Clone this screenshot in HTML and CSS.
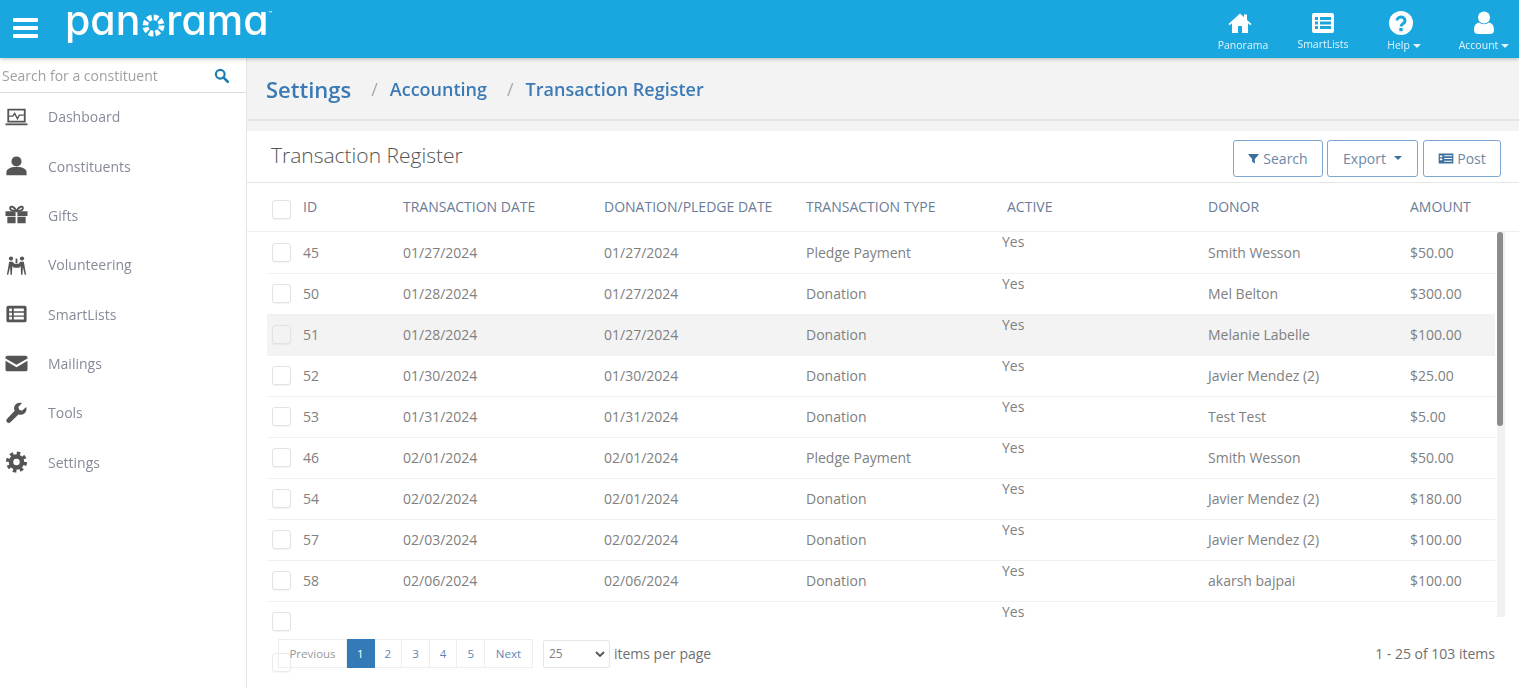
FILE: index.html
```html
<!DOCTYPE html>
<html lang="en">
<head>
    <meta charset="UTF-8">
    <title>Transaction Register</title>
    <link rel="stylesheet" href="styles.css">
</head>
<body>
<div class="page">
    <header class="topbar">
        <div class="burger"><span></span><span></span><span></span></div>
        <div class="logo">pan<svg class="logo-o" viewBox="0 0 24 24"><circle cx="12" cy="12" r="8.500" fill="none" stroke="#fff" stroke-width="6" stroke-dasharray="4.600 2.070"/></svg>rama<sup>™</sup></div>
        <nav class="topnav">
            <a class="topnav-item topnav-home">
                <svg viewBox="0 0 24 24"><path d="M12 2.500 0.500 13l1.200 1.200L4 12.200V22h6v-7h4v7h6v-9.800l2.300 2 1.200-1.200-4.500-4.100V3.500h-3v2.800z" fill="#fff"/></svg>
                <span>Panorama</span>
            </a>
            <a class="topnav-item topnav-lists">
                <svg viewBox="0 0 24 24"><path fill-rule="evenodd" d="M3 2h18a2 2 0 0 1 2 2v16a2 2 0 0 1-2 2H3a2 2 0 0 1-2-2V4a2 2 0 0 1 2-2zm1 4v3h3V6zm5 0v3h11V6zm-5 4.500v3h3v-3zm5 0v3h11v-3zM4 15v3h3v-3zm5 0v3h11v-3z" fill="#fff"/></svg>
                <span>SmartLists</span>
            </a>
            <a class="topnav-item topnav-help">
                <svg viewBox="0 0 24 24"><circle cx="12" cy="12" r="12" fill="#fff"/><path d="M8 9.500a4 3.600 0 1 1 6.300 3c-1.500 1-2.300 1.500-2.300 3" fill="none" stroke="#1aa7e0" stroke-width="3"/><rect x="10.300" y="17" width="3.400" height="3.200" fill="#1aa7e0"/></svg>
                <span>Help<i class="caret"></i></span>
            </a>
            <a class="topnav-item topnav-account">
                <svg viewBox="0 0 24 24"><circle cx="12" cy="6.500" r="6" fill="#fff"/><path d="M2 19c0-5 2.500-7 5-7.500 1.500 1.200 3 1.700 5 1.700s3.500-.5 5-1.700c2.500.5 5 2.500 5 7.500 0 3-2 4-4 4H6c-2 0-4-1-4-4z" fill="#fff"/></svg>
                <span>Account<i class="caret"></i></span>
            </a>
        </nav>
    </header>

    <div class="layout">
        <aside class="sidebar">
            <div class="side-search">
                <span>Search for a constituent</span>
                <svg viewBox="0 0 24 24"><circle cx="10" cy="10" r="7" fill="none" stroke="#1b7db0" stroke-width="3.500"/><path d="m15 15 7 7" stroke="#1b7db0" stroke-width="4" stroke-linecap="round"/></svg>
            </div>
            <ul class="side-nav">
                <li><svg viewBox="0 0 24 24"><path fill-rule="evenodd" d="M2 3h20v15H2zm2 2v11h16V5z" fill="#555"/><path d="M0 19h24v2H0z" fill="#555"/><path d="M4 11h4l2-3 3 6 2-4h5" fill="none" stroke="#555" stroke-width="1.500"/></svg>Dashboard</li>
                <li><svg viewBox="0 0 24 24"><circle cx="12" cy="7" r="5.500" fill="#555"/><path d="M1 22v-3c0-4 4-6 11-6s11 2 11 6v3z" fill="#555"/></svg>Constituents</li>
                <li><svg viewBox="0 0 24 24"><path d="M0 8h11v5H0zm13 0h11v5H13zM2 14h9v7H2zm11 0h9v7h-9z" fill="#555"/><path d="M12 7.500C9 7.500 5 7 5 4.500S9 2 12 7.500C15 2 19 2 19 4.500S15 7.500 12 7.500z" fill="none" stroke="#555" stroke-width="2"/></svg>Gifts</li>
                <li><svg viewBox="0 0 24 24"><circle cx="6" cy="5" r="2.300" fill="#555"/><circle cx="18" cy="5" r="2.300" fill="#555"/><path d="M4 8.500h4l1.500 2h5l1.500-2h4l2.500 14H21l-2-8-.5 8H17l-.5-9.500-1.500 2H9l-1.500-2L7 22.500H5.500l-.5-8-2 8H1.500z" fill="#555"/><path d="M11 5h2v5h-2z" fill="#555"/></svg>Volunteering</li>
                <li><svg viewBox="0 0 24 24"><path fill-rule="evenodd" d="M3 3h18a2 2 0 0 1 2 2v14a2 2 0 0 1-2 2H3a2 2 0 0 1-2-2V5a2 2 0 0 1 2-2zm1 3v3h3V6zm5 0v3h11V6zm-5 4.500v3h3v-3zm5 0v3h11v-3zM4 15v3h3v-3zm5 0v3h11v-3z" fill="#555"/></svg>SmartLists</li>
                <li><svg viewBox="0 0 24 24"><path d="M2 4h20a2 2 0 0 1 2 2v1l-12 7L0 7V6a2 2 0 0 1 2-2zM0 9.500l12 7 12-7V19a2 2 0 0 1-2 2H2a2 2 0 0 1-2-2z" fill="#555"/></svg>Mailings</li>
                <li><svg viewBox="0 0 24 24"><path d="M22.500 5.500 18 9.500l-3-1-1-3 4-4.300c-3-1-6.500-.2-8 2.800-1 2-.8 4 0 5.500L2 18c-1.500 1.500-1.300 3-.3 4s2.500 1.200 4-.3l8.500-8.200c1.700.7 3.800.8 5.600-.3 3-1.800 3.700-5 2.700-7.700z" fill="#555"/></svg>Tools</li>
                <li><svg viewBox="0 0 24 24"><circle cx="12" cy="12" r="9.500" fill="none" stroke="#555" stroke-width="4" stroke-dasharray="3.730 3.730"/><circle cx="12" cy="12" r="6" fill="none" stroke="#555" stroke-width="5"/></svg>Settings</li>
            </ul>
        </aside>

        <main class="content">
            <div class="crumbs">
                <a class="crumb-root">Settings</a>
                <span class="crumb-sep">/</span>
                <a>Accounting</a>
                <span class="crumb-sep">/</span>
                <a>Transaction Register</a>
            </div>

            <section class="card">
                <div class="card-head">
                    <h2>Transaction Register</h2>
                    <div class="actions">
                        <button class="btn btn-search"><svg viewBox="0 0 24 24"><path d="M1 2h22v2l-8 9v10l-6-4v-6L1 4z" fill="#3d6f9e"/></svg>Search</button>
                        <button class="btn btn-export">Export<i class="caret caret-dark"></i></button>
                        <button class="btn btn-post"><svg viewBox="0 0 24 18"><path fill-rule="evenodd" d="M0 1h24v16H0zm9 2.500v2h13v-2zm0 4.500v2h13V8zm0 4.500v2h13v-2zM2 4v3h4V4zm0 5v3h4V9z" fill="#3d6f9e"/></svg>Post</button>
                    </div>
                </div>

                <div class="grid grid-head">
                    <span class="check"></span>
                    <span>ID</span>
                    <span>Transaction Date</span>
                    <span>Donation/Pledge Date</span>
                    <span>Transaction Type</span>
                    <span>Active</span>
                    <span>Donor</span>
                    <span>Amount</span>
                </div>

                <div class="scroller">
                    <div class="rows">
                        <div class="grid row row-first"><span class="check"></span><span>45</span><span>01/27/2024</span><span>01/27/2024</span><span>Pledge Payment</span><span class="active">Yes</span><span>Smith Wesson</span><span>$50.00</span></div>
                        <div class="grid row"><span class="check"></span><span>50</span><span>01/28/2024</span><span>01/27/2024</span><span>Donation</span><span class="active">Yes</span><span>Mel Belton</span><span>$300.00</span></div>
                        <div class="grid row row-hover"><span class="check"></span><span>51</span><span>01/28/2024</span><span>01/27/2024</span><span>Donation</span><span class="active">Yes</span><span>Melanie Labelle</span><span>$100.00</span></div>
                        <div class="grid row"><span class="check"></span><span>52</span><span>01/30/2024</span><span>01/30/2024</span><span>Donation</span><span class="active">Yes</span><span>Javier Mendez (2)</span><span>$25.00</span></div>
                        <div class="grid row"><span class="check"></span><span>53</span><span>01/31/2024</span><span>01/31/2024</span><span>Donation</span><span class="active">Yes</span><span>Test Test</span><span>$5.00</span></div>
                        <div class="grid row"><span class="check"></span><span>46</span><span>02/01/2024</span><span>02/01/2024</span><span>Pledge Payment</span><span class="active">Yes</span><span>Smith Wesson</span><span>$50.00</span></div>
                        <div class="grid row"><span class="check"></span><span>54</span><span>02/02/2024</span><span>02/01/2024</span><span>Donation</span><span class="active">Yes</span><span>Javier Mendez (2)</span><span>$180.00</span></div>
                        <div class="grid row"><span class="check"></span><span>57</span><span>02/03/2024</span><span>02/02/2024</span><span>Donation</span><span class="active">Yes</span><span>Javier Mendez (2)</span><span>$100.00</span></div>
                        <div class="grid row"><span class="check"></span><span>58</span><span>02/06/2024</span><span>02/06/2024</span><span>Donation</span><span class="active">Yes</span><span>akarsh bajpai</span><span>$100.00</span></div>
                        <div class="grid row"><span></span><span></span><span></span><span></span><span></span><span class="active">Yes</span><span></span><span></span></div>
                    </div>
                    <div class="scrollbar"><div class="thumb"></div></div>
                </div>

                <!-- checkboxes that spill out under the table -->
                <span class="check spill spill-1"></span>
                <span class="check spill spill-2"></span>

                <div class="pager-row">
                    <div class="pager">
                        <a class="page-link page-prev">Previous</a>
                        <a class="page-link page-on">1</a>
                        <a class="page-link">2</a>
                        <a class="page-link">3</a>
                        <a class="page-link">4</a>
                        <a class="page-link">5</a>
                        <a class="page-link page-next">Next</a>
                    </div>
                    <div class="per-page">
                        <span>25</span>
                        <svg viewBox="0 0 10 6"><path d="m1 1 4 4 4-4" fill="none" stroke="#555" stroke-width="1.800"/></svg>
                    </div>
                    <span class="per-label">items per page</span>
                    <span class="total">1 - 25 of 103 items</span>
                </div>
            </section>
        </main>
    </div>
</div>
</body>
</html>
```

FILE: styles.css
```css
html, body {
    margin: 0;
    height: 100%;
    overflow: hidden;
    background: #fff;
}
.page {
    display: flex;
    flex-direction: column;
    height: 688px;
    font-family: 'Open Sans', 'Liberation Sans', sans-serif;
    font-size: 14px;
    color: #808080;
    filter: blur(0.6px);
}

/* top bar */
.topbar {
    display: flex;
    align-items: flex-start;
    height: 58px;
    flex: none;
    background: #1aa7e0;
    box-shadow: 0 1px 4px rgba(0, 0, 0, 0.25);
    position: relative;
    z-index: 2;
}
.burger {
    display: flex;
    flex-direction: column;
    gap: 4px;
    width: 25px;
    margin: 18px 0 0 13px;
}
.burger span {
    height: 4px;
    background: #fff;
    border-radius: 1px;
}
.logo {
    display: flex;
    align-items: flex-start;
    margin: 0 0 0 27px;
    font-family: 'Inter', 'Open Sans', sans-serif;
    font-feature-settings: 'cv11' 1;
    font-size: 41px;
    font-weight: 500;
    line-height: 40px;
    color: #fff;
}
.logo-o {
    width: 23px;
    height: 23px;
    margin: 14px 1px 0 2px;
}
.logo sup {
    font-size: 6px;
    line-height: 28px;
}
.topnav {
    display: flex;
    margin-left: auto;
}
.topnav-item {
    display: flex;
    flex-direction: column;
    align-items: center;
    width: 80px;
    padding-top: 11px;
    font-size: 10.500px;
    line-height: 14px;
    color: #e3f4fb;
}
.topnav-item svg {
    width: 26px;
    height: 24px;
    margin-bottom: 3px;
}
.topnav-home svg,
.topnav-help svg {
    margin-right: 6px;
}
.topnav-lists span {
    margin-top: -1px;
}
.topnav-help {
    width: 82px;
}
.topnav-account {
    width: 70px;
    padding-left: 4px;
}
.caret {
    display: inline-block;
    margin-left: 3px;
    vertical-align: middle;
    border-top: 4px solid #e3f4fb;
    border-left: 4px solid transparent;
    border-right: 4px solid transparent;
}
.caret-dark {
    margin-left: 8px;
    border-top-color: #3d6f9e;
}

/* sidebar */
.layout {
    display: flex;
    flex: 1;
    min-height: 0;
}
.sidebar {
    width: 246px;
    flex: none;
    border-right: 1px solid #e4e4e4;
}
.side-search {
    display: flex;
    align-items: center;
    justify-content: space-between;
    height: 34px;
    padding: 0 17px 0 2px;
    border-bottom: 1px solid #ddd;
    color: #a0a0a0;
}
.side-search svg {
    width: 15px;
    height: 15px;
}
.side-nav {
    list-style: none;
    margin: -1px 0 0;
    padding: 0;
}
.side-nav li {
    display: flex;
    align-items: center;
    height: 49.350px;
    padding-left: 5px;
    color: #868b99;
}
.side-nav svg {
    width: 23px;
    height: 22px;
    margin-right: 20px;
}

/* content */
.content {
    flex: 1;
    min-width: 0;
    display: flex;
    flex-direction: column;
    background: #f3f3f3;
}
.crumbs {
    display: flex;
    align-items: center;
    height: 61px;
    flex: none;
    padding-left: 19px;
    border-bottom: 2px solid #e4e4e4;
    font-size: 18px;
    font-weight: 600;
    color: #3c7ab5;
}
.crumb-root {
    font-size: 22px;
    margin-top: 1px;
}
.crumb-sep {
    margin: 0 12px 0 20px;
    font-weight: 400;
    color: #aaa;
}
.card {
    position: relative;
    flex: 1;
    margin-top: 10px;
    background: #fff;
}
.card-head {
    display: flex;
    align-items: center;
    justify-content: space-between;
    height: 51px;
    padding: 0 18px 0 24px;
    border-bottom: 1px solid #e6e6e6;
}
.card-head h2 {
    margin: 0 0 3px;
    font-size: 21px;
    font-weight: 300;
    color: #555;
}
.actions {
    display: flex;
    gap: 4px;
    margin-top: 3px;
}
.btn {
    display: flex;
    align-items: center;
    justify-content: center;
    height: 37px;
    padding: 0;
    border: 1px solid #7ba7d2;
    border-radius: 3px;
    background: #fff;
    font: inherit;
    color: #6d87a6;
}
.btn svg {
    width: 11px;
    height: 11px;
    margin-right: 4px;
}
.btn-search { width: 90px; }
.btn-export { width: 91px; }
.btn-post { width: 78px; margin-left: 1px; }
.btn-post svg {
    width: 16px;
    margin-right: 3px;
}

/* table */
.grid {
    display: grid;
    grid-template-columns: 36px 100px 201px 202px 201px 201px 202px 1fr;
    align-items: center;
    width: 1228px;
    margin-left: 20px;
}
.grid-head {
    height: 47.500px;
    text-transform: uppercase;
    color: #6a7c98;
}
.grid-head .check {
    margin-top: 5px;
}
.check {
    display: block;
    width: 17px;
    height: 17px;
    margin-left: 5px;
    border: 1px solid #e2e2e2;
    border-radius: 3px;
    background: #fff;
    box-shadow: 0 1px 1px rgba(0, 0, 0, 0.05);
}
.scroller {
    position: relative;
    height: 385px;
    overflow: hidden;
    border-top: 1px solid #eee;
}
.row {
    height: 41px;
    border-bottom: 1px solid #f0f0f0;
    box-sizing: border-box;
}
.row-first {
    height: 42px;
}
.row-hover {
    background: #f3f3f3;
}
.row-hover .check {
    background: #f3f3f3;
}
.active {
    align-self: start;
    margin-left: -5px;
}
.scrollbar {
    position: absolute;
    top: 0;
    left: 1250px;
    bottom: 0;
    width: 8px;
    background: #f1f1f1;
}
.thumb {
    width: 6px;
    height: 194px;
    border-radius: 3px;
    background: #8c8c8c;
}
.spill {
    position: absolute;
    left: 20px;
}
.spill-1 { top: 481px; }
.spill-2 { top: 522px; opacity: 0.7; }

/* pager */
.pager-row {
    display: flex;
    align-items: center;
    height: 29px;
    margin: 22.500px 24px 0 31px;
    position: relative;
}
.pager {
    display: flex;
    height: 29px;
}
.page-link {
    display: flex;
    align-items: center;
    justify-content: center;
    box-sizing: border-box;
    width: 27.600px;
    border: 1px solid #eee;
    border-left: none;
    font-size: 11.500px;
    color: #5c87b5;
}
.page-prev {
    width: 69px;
    border-left: 1px solid #eee;
    color: #999;
}
.page-next {
    width: 48px;
}
.page-on {
    background: #337ab7;
    border-color: #337ab7;
    color: #fff;
}
.per-page {
    display: flex;
    align-items: center;
    justify-content: space-between;
    box-sizing: border-box;
    width: 67px;
    height: 28px;
    margin-left: 10px;
    padding: 0 4px 0 5px;
    border: 1px solid #e6e6e6;
    border-radius: 2px;
    font-size: 12px;
}
.per-page svg {
    width: 10px;
    height: 6px;
}
.per-label {
    margin-left: 4px;
    color: #707070;
}
.total {
    margin-left: auto;
    color: #707070;
}
```
